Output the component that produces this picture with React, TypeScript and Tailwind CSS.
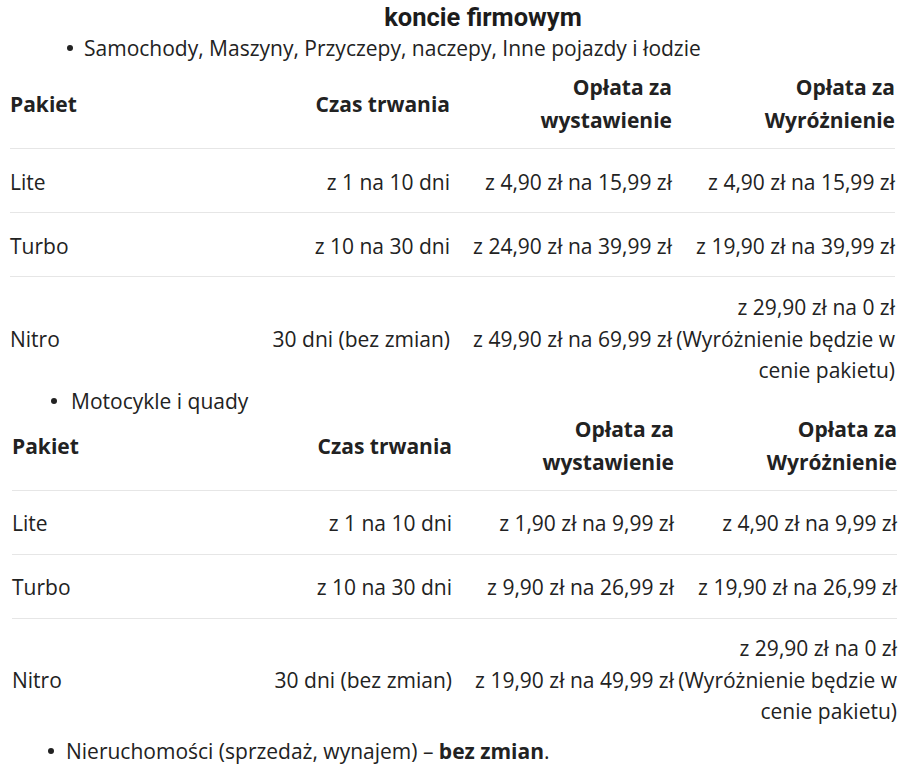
import React from "react";

type Row = { name: string; time: string; fee: React.ReactNode; hl: React.ReactNode; multi?: boolean };

const font = { fontFamily: '"Open Sans", "Liberation Sans", sans-serif' };

function Table({ rows, second }: { rows: Row[]; second: boolean }) {
  const cols = "grid grid-cols-[240px_200px_222px_223px]";
  return (
    <div className={second ? "ml-[12px] w-[885px]" : "ml-[10px] w-[885px]"}>
      <div
        className={`${cols} items-center font-bold leading-[33px] pb-[11px] border-b border-[#e6e6e6] ${
          second ? "pt-0" : "pt-[9px]"
        }`}
      >
        <div className="text-left">Pakiet</div>
        <div className="text-right">Czas trwania</div>
        <div className="text-right">
          Opłata za
          <br />
          wystawienie
        </div>
        <div className="text-right">
          Opłata za
          <br />
          Wyróżnienie
        </div>
      </div>
      {rows.map((r, i) => (
        <div
          key={i}
          className={
            r.multi
              ? `${cols} items-center leading-[31.5px] pb-0 ${second ? "pt-[14px]" : "pt-[15px]"}`
              : `${cols} items-center leading-[32px] border-b border-[#e6e6e6] ${
                  second ? "pt-[16px] pb-[15px]" : "pt-[17px] pb-[14px]"
                }`
          }
        >
          <div className="text-left">{r.name}</div>
          <div className="text-right whitespace-nowrap">{r.time}</div>
          <div className="text-right whitespace-nowrap">{r.fee}</div>
          <div className="text-right whitespace-nowrap">{r.hl}</div>
        </div>
      ))}
    </div>
  );
}

const nitroHl = (
  <>
    z 29,90 zł na 0 zł
    <br />
    (Wyróżnienie będzie w
    <br />
    cenie pakietu)
  </>
);

const Dot = () => <span className="block w-[6px] h-[6px] rounded-full bg-[#222222] shrink-0" />;

export default function App() {
  const rows1: Row[] = [
    { name: "Lite", time: "z 1 na 10 dni", fee: "z 4,90 zł na 15,99 zł", hl: "z 4,90 zł na 15,99 zł" },
    { name: "Turbo", time: "z 10 na 30 dni", fee: "z 24,90 zł na 39,99 zł", hl: "z 19,90 zł na 39,99 zł" },
    { name: "Nitro", time: "30 dni (bez zmian)", fee: "z 49,90 zł na 69,99 zł", hl: nitroHl, multi: true },
  ];
  const rows2: Row[] = [
    { name: "Lite", time: "z 1 na 10 dni", fee: "z 1,90 zł na 9,99 zł", hl: "z 4,90 zł na 9,99 zł" },
    { name: "Turbo", time: "z 10 na 30 dni", fee: "z 9,90 zł na 26,99 zł", hl: "z 19,90 zł na 26,99 zł" },
    { name: "Nitro", time: "30 dni (bez zmian)", fee: "z 19,90 zł na 49,99 zł", hl: nitroHl, multi: true },
  ];
  return (
    <div className="w-[904px] h-[768px] overflow-hidden bg-white text-[#222222] text-[21px]" style={font}>
      <h2
        className="h-[34px] leading-[34px] pl-[62px] text-center text-[25.5px] font-bold text-[#1c1c1c]"
        style={{ fontFamily: 'Roboto, "Liberation Sans", sans-serif' }}
      >
        koncie firmowym
      </h2>
      <ul className="leading-[28px] pl-[67px]">
        <li className="flex items-center gap-[11px]">
          <Dot />
          <span>Samochody, Maszyny, Przyczepy, naczepy, Inne pojazdy i łodzie</span>
        </li>
      </ul>
      <Table rows={rows1} second={false} />
      <ul className="leading-[24px] pl-[51px] pt-[2.5px]">
        <li className="flex items-center gap-[14px]">
          <Dot />
          <span>Motocykle i quady</span>
        </li>
      </ul>
      <Table rows={rows2} second={true} />
      <ul className="leading-[28px] pl-[47.5px] mt-[9.5px]">
        <li className="flex items-center gap-[12.5px]">
          <Dot />
          <span>
            Nieruchomości (sprzedaż, wynajem) – <b>bez zmian</b>.
          </span>
        </li>
      </ul>
    </div>
  );
}
